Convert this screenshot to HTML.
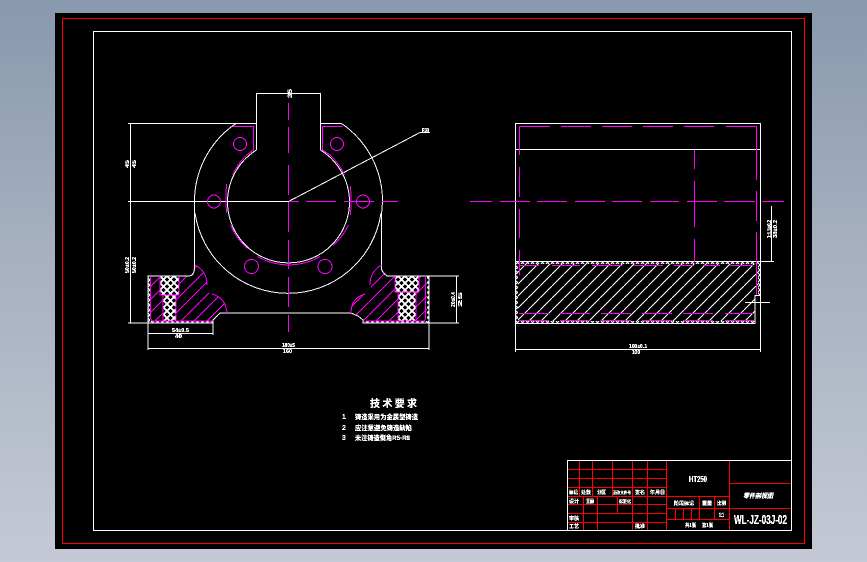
<!DOCTYPE html>
<html>
<head>
<meta charset="utf-8">
<style>
html,body{margin:0;padding:0;width:867px;height:562px;overflow:hidden;background:linear-gradient(180deg,#8899ad 0%,#a6b0c0 45%,#c4c9d5 100%);}
svg{position:absolute;left:0;top:0;}
text{font-family:"Liberation Sans","Noto Sans CJK SC",sans-serif;fill:#fff;font-weight:bold;}
</style>
</head>
<body>
<svg width="867" height="562" viewBox="0 0 867 562" xmlns="http://www.w3.org/2000/svg" shape-rendering="crispEdges">
<defs>
<filter id="blk" x="-5%" y="-5%" width="110%" height="110%" color-interpolation-filters="sRGB">
<feComponentTransfer><feFuncA type="discrete" tableValues="0 1 1 1"/></feComponentTransfer>
</filter>
<pattern id="h1" width="13" height="13" patternUnits="userSpaceOnUse" patternTransform="translate(148 276)">
<path d="M-1 14L14 -1" stroke="#f0f" stroke-width="1"/>
</pattern>
<pattern id="h2" width="12" height="12" patternUnits="userSpaceOnUse" patternTransform="translate(516 262)">
<path d="M-1 13L13 -1" stroke="#fff" stroke-width="1"/>
</pattern>
<pattern id="x" width="7" height="7" patternUnits="userSpaceOnUse" patternTransform="translate(160 276)">
<rect width="7" height="7" fill="#000"/>
<path d="M0 0L7 7M7 0L0 7" stroke="#fff" stroke-width="2"/>
</pattern>
<pattern id="x2" width="5" height="5" patternUnits="userSpaceOnUse">
<rect width="5" height="5" fill="#000"/>
<path d="M0 0L5 5M5 0L0 5" stroke="#fff" stroke-width="1"/>
</pattern>
</defs>
<rect x="55" y="13" width="757" height="536" fill="#000"/>
<rect x="62.5" y="18.5" width="742" height="525" fill="none" stroke="#f00" stroke-width="1"/>
<rect x="93.5" y="31.5" width="698" height="499" fill="none" stroke="#fff" stroke-width="1"/>

<!-- LEFT VIEW: hatch areas -->
<path d="M150 276H191L195 265Q207 272 207 285L205 292L212 294Q226 300 227 313H219L213 321H150Z" fill="url(#h1)"/>
<path d="M427 276H387L382 265Q370 272 370 285L372 292L365 294Q351 300 351 313L358 315L364 321H427Z" fill="url(#h1)"/>
<rect x="148" y="276" width="2" height="47" fill="url(#x2)"/>
<rect x="427" y="276" width="2" height="47" fill="url(#x2)"/>
<rect x="148" y="321" width="65" height="2" fill="url(#x2)"/>
<rect x="364" y="321" width="65" height="2" fill="url(#x2)"/>
<rect x="160" y="276" width="19" height="19" fill="url(#x)"/>
<rect x="163" y="295" width="13" height="26" fill="url(#x)"/>
<rect x="395" y="276" width="24" height="16" fill="url(#x)"/>
<rect x="398" y="292" width="18" height="29" fill="url(#x)"/>

<!-- LEFT VIEW: white outline -->
<g fill="none" stroke="#fff" stroke-width="1">
<path d="M236 123.500H256.500V93.500H320.500V123.500H341.500"/>
<path d="M128 123.500H236"/>
<path d="M256.500 123.500V150M320.500 123.500V150"/>
<path d="M236 123.500A94 94 0 0 0 194.500 201.500V268Q194.500 276 188 276H148V323H213V320L220 313H351L358 316L363 320V323H459M429 276V323M387 276H459M148 323H128"/>
<path d="M341.500 123.500A94 94 0 0 1 382.500 201.500L381.500 215V268Q381.500 272 387 276"/>
<path d="M195 213A94 94 0 0 0 381 213"/>
<path d="M256.500 150A61 61 0 1 0 320.500 150"/>
<path d="M128 201.500H288.500L420 132.500H430"/>
<path d="M130.500 124V323"/>
<path d="M148 323V336M148 336V350M429 323V350M213 323V335"/>
<path d="M148 333.500H213M148 348.500H429"/>
<path d="M456.500 276V323"/>
</g>

<!-- LEFT VIEW: magenta -->
<g fill="none" stroke="#f0f" stroke-width="1">
<path d="M288.500 103V120M288.500 127V153M288.500 165V195M288.500 202V232M288.500 240V269M288.500 277V307M288.500 315V332"/>
<path d="M289 201.500H299M306 201.500H336M344 201.500H374M382 201.500H398"/>
<circle cx="240" cy="144" r="6.500"/><circle cx="337" cy="144" r="6.500"/>
<circle cx="214" cy="201.500" r="6.500"/><circle cx="363" cy="201.500" r="6.500"/>
<circle cx="251.500" cy="266.500" r="7"/><circle cx="325" cy="266.500" r="7"/>
<path d="M232.500 126.500H253.500V150L246.700 155A63 63 0 0 0 232.500 175"/>
<path d="M342.500 126.500H322.500V150L330 155A63 63 0 0 1 344.500 175"/>
<path d="M226.500 184Q225.500 198 226.500 213M350.500 186Q351.500 200 350.500 215"/>
<path d="M230.500 225A63 63 0 0 0 247.500 248.500M348.500 225A63 63 0 0 1 333.500 245"/>
<path d="M257.500 256.500A62.500 62.500 0 0 0 320 256.500"/>
<path d="M195 265Q207 271 207 285"/>
<path d="M212 294Q226 298 227 313"/>
<path d="M382 265Q370 271 370 285"/>
<path d="M365 294Q351 298 351 313"/>
<path d="M160 276V295H179V276M163 295V321M176 295V321M150.500 276V318Q151 321 154 321H213"/>
<path d="M395 276V292H419V276M398 292V321M416 292V321M425.500 276V318Q425 321 423 321H366"/>
</g>

<!-- RIGHT VIEW -->
<path d="M518 264H758V295H755V321H518Z" fill="url(#h2)"/>
<rect x="516" y="262" width="2" height="61" fill="url(#x2)"/>
<rect x="516" y="262" width="244" height="2" fill="url(#x2)"/>
<rect x="516" y="321" width="239" height="2" fill="url(#x2)"/>
<rect x="758" y="262" width="2" height="33" fill="url(#x2)"/>
<g fill="none" stroke="#fff" stroke-width="1">
<path d="M515.500 352V123.500H760.500V352"/>
<path d="M515.500 149.500H760.500"/>
<path d="M515.500 261.500H774"/>
<path d="M515.500 323.500H755V295.500H760.500M755 302.500H760.500"/>
<path d="M515.500 349.500H760.500"/>
<path d="M745 302.500H770"/>
<path d="M771.500 206V261"/>
</g>
<g fill="none" stroke="#f0f" stroke-width="1">
<path d="M519.500 155V126.500H550M561 126.500H591M602 126.500H632M643 126.500H673M684 126.500H714M726 126.500H756.500V180M756.500 191V221M756.500 232V295"/>
<path d="M519.500 167V197M519.500 209V238M519.500 250V275"/>
<path d="M694.500 150V169M694.500 181V227M694.500 239V262"/>
<path d="M470 201.500H492M500 201.500H530M537 201.500H567M575 201.500H605M612 201.500H642M650 201.500H679M687 201.500H717M724 201.500H755M762 201.500H784"/>
<path d="M519 265.500H539M552 265.500H580M592 265.500H622M633 265.500H663M674 265.500H694M703 265.500H720M730 265.500H753"/>
<path d="M519 313.500H549M560 313.500H590M601 313.500H631M642 313.500H672M683 313.500H713M725 313.500H754"/>
<path d="M519 320.500H549M560 320.500H590M601 320.500H631M642 320.500H672M683 320.500H713M725 320.500H754"/>
</g>

<!-- TITLE BLOCK -->
<g fill="none" stroke="#f00" stroke-width="1">
<path d="M568 469.500H666M568 478.500H666M568 487.500H666M568 496.500H729M568 504.500H666M568 513.500H666M568 522.500H666"/>
<path d="M579.500 461V496M592.500 461V496M612.500 461V496M632.500 461V530M647.500 461V530"/>
<path d="M583.500 496V530M597.500 496V530M617.500 496V513"/>
<path d="M666.500 461V530M729.500 461V530"/>
<path d="M729.500 483.500H791M666.500 508.500H791M666.500 519.500H729"/>
<path d="M675.500 508V519M683.500 508V519M691.500 508V519M699.500 496V519M714.500 496V519"/>
</g>
<rect x="567.500" y="460.500" width="224" height="70" fill="none" stroke="#fff" stroke-width="1"/>

<g filter="url(#blk)">
<!-- TEXT: title block -->
<text x="569" y="494" font-size="5" textLength="9" lengthAdjust="spacingAndGlyphs">标记</text>
<text x="581" y="494" font-size="5" textLength="10" lengthAdjust="spacingAndGlyphs">处数</text>
<text x="597" y="494" font-size="5" textLength="9" lengthAdjust="spacingAndGlyphs">分区</text>
<text x="613" y="494" font-size="4" textLength="18" lengthAdjust="spacingAndGlyphs">更改文件号</text>
<text x="635" y="494" font-size="5" textLength="10" lengthAdjust="spacingAndGlyphs">签名</text>
<text x="650" y="494" font-size="5" textLength="15" lengthAdjust="spacingAndGlyphs">年月日</text>
<text x="569" y="503" font-size="5" textLength="10" lengthAdjust="spacingAndGlyphs">设计</text>
<text x="586" y="503" font-size="5" textLength="8" lengthAdjust="spacingAndGlyphs">王丽</text>
<text x="619" y="503" font-size="4.500" textLength="12" lengthAdjust="spacingAndGlyphs">标准化</text>
<text x="569" y="520" font-size="5" textLength="10" lengthAdjust="spacingAndGlyphs">审核</text>
<text x="569" y="528" font-size="5" textLength="10" lengthAdjust="spacingAndGlyphs">工艺</text>
<text x="635" y="528" font-size="5" textLength="10" lengthAdjust="spacingAndGlyphs">批准</text>
<text x="689" y="482" font-size="8" textLength="18" lengthAdjust="spacingAndGlyphs">HT250</text>
<text x="674" y="505" font-size="5" textLength="20" lengthAdjust="spacingAndGlyphs">阶段标记</text>
<text x="702" y="505" font-size="5" textLength="10" lengthAdjust="spacingAndGlyphs">重量</text>
<text x="717" y="505" font-size="5" textLength="9" lengthAdjust="spacingAndGlyphs">比例</text>
<text x="719" y="517" font-size="6" textLength="5" lengthAdjust="spacingAndGlyphs" font-weight="normal">1:1</text>
<text x="685" y="527" font-size="5" textLength="11" lengthAdjust="spacingAndGlyphs">共1张</text>
<text x="702" y="527" font-size="5" textLength="11" lengthAdjust="spacingAndGlyphs">第1张</text>
<text x="743" y="498" font-size="6.500" font-style="italic" textLength="30" lengthAdjust="spacingAndGlyphs">零件剖视图</text>
<text x="734" y="524" font-size="13" textLength="53" lengthAdjust="spacingAndGlyphs">WL-JZ-03J-02</text>

<!-- TEXT: technical requirements -->
<text x="370" y="407" font-size="10" textLength="47">技 术 要 求</text>
<text x="342" y="419" font-size="7">1</text>
<text x="355" y="419" font-size="6.500" textLength="63" lengthAdjust="spacingAndGlyphs">铸造采用为金属型铸造</text>
<text x="342" y="430" font-size="7">2</text>
<text x="355" y="430" font-size="6.500" textLength="57" lengthAdjust="spacingAndGlyphs">应注意避免铸造缺陷</text>
<text x="342" y="440" font-size="7">3</text>
<text x="355" y="440" font-size="6.500" textLength="55" lengthAdjust="spacingAndGlyphs">未注铸造倒角R5-R8</text>

<!-- TEXT: dimensions -->
<text x="422" y="132" font-size="5" textLength="7" lengthAdjust="spacingAndGlyphs">R30</text>
<text x="292" y="98" font-size="6" textLength="9" lengthAdjust="spacingAndGlyphs" transform="rotate(-90 292 98)">35</text>
<text x="282" y="347" font-size="5.500" textLength="13" lengthAdjust="spacingAndGlyphs">180±5</text>
<text x="283" y="353" font-size="5.500" textLength="9" lengthAdjust="spacingAndGlyphs">160</text>
<text x="172" y="332" font-size="5.500" textLength="17" lengthAdjust="spacingAndGlyphs">54±0.5</text>
<text x="175" y="338" font-size="5.500" textLength="7" lengthAdjust="spacingAndGlyphs">40</text>
<text x="129" y="168" font-size="5.500" textLength="8" lengthAdjust="spacingAndGlyphs" transform="rotate(-90 129 168)">45</text>
<text x="136" y="168" font-size="5.500" textLength="8" lengthAdjust="spacingAndGlyphs" transform="rotate(-90 136 168)">45</text>
<text x="129" y="273" font-size="5.500" textLength="16" lengthAdjust="spacingAndGlyphs" transform="rotate(-90 129 273)">50±0.2</text>
<text x="136" y="273" font-size="5.500" textLength="16" lengthAdjust="spacingAndGlyphs" transform="rotate(-90 136 273)">50±0.2</text>
<text x="455" y="307" font-size="5.500" textLength="15" lengthAdjust="spacingAndGlyphs" transform="rotate(-90 455 307)">20±0.4</text>
<text x="462" y="307" font-size="5.500" textLength="15" lengthAdjust="spacingAndGlyphs" transform="rotate(-90 462 307)">25</text>
<text x="629" y="348" font-size="5.500" textLength="18" lengthAdjust="spacingAndGlyphs">100±0.1</text>
<text x="632" y="354" font-size="5.500" textLength="8" lengthAdjust="spacingAndGlyphs">100</text>
<text x="771" y="238" font-size="5.500" textLength="18" lengthAdjust="spacingAndGlyphs" transform="rotate(-90 771 238)">1:1.5±0.2</text>
<text x="777" y="238" font-size="5.500" textLength="18" lengthAdjust="spacingAndGlyphs" transform="rotate(-90 777 238)">38±0.2</text>
</g>
</svg>
</body>
</html>
